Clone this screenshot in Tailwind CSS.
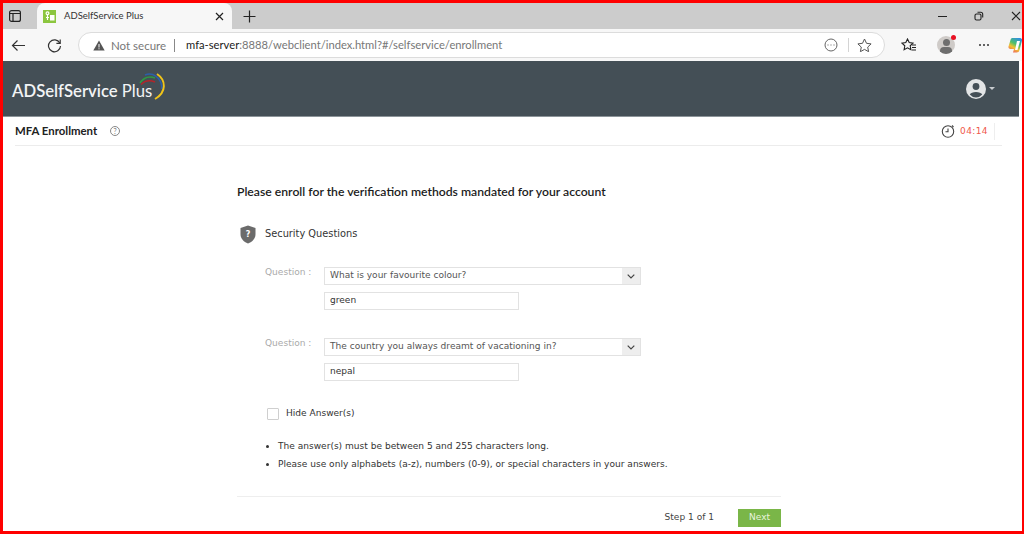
<!DOCTYPE html>
<html lang="en">
<head>
    <meta charset="UTF-8">
    <title>ADSelfService Plus</title>
    <script src="https://cdn.jsdelivr.net/npm/@tailwindcss/browser@4"></script>
</head>
<body class="bg-white overflow-hidden font-['Lato',sans-serif]">
<div class="h-[534px] w-[1024px] border-t-[3px] border-l-[3px] border-b-[3px] border-r-[2px] border-[#ff0000] flex flex-col overflow-hidden relative">

    <!-- Tab strip -->
    <div class="h-[26px] bg-[#cccccc] flex items-end shrink-0">
        <div class="w-[34px] h-full flex items-center pl-[6px]">
            <svg width="12" height="12" viewBox="0 0 12 12" fill="none" stroke="#222" stroke-width="1.2"><rect x="0.6" y="0.6" width="10.8" height="10.8" rx="2"/><path d="M0.6 3.5h10.8M4 3.5v8" /></svg>
        </div>
        <div class="w-[195px] h-[26px] bg-[#f7f7f7] rounded-t-lg flex items-center pl-[6px] pr-[8px]">
            <div class="w-[13px] h-[13px] bg-[#8cc63f] flex items-center justify-center">
                <svg width="10" height="10" viewBox="0 0 10 10" fill="none" stroke="#fff" stroke-width="1.2"><rect x="5" y="4" width="4.5" height="5.5" fill="#fff" stroke="none"/><circle cx="2.5" cy="2.2" r="1.4"/><path d="M2.5 3.6v5.5M1 6.5h3"/></svg>
            </div>
            <span class="ml-[8px] text-[9.5px] text-[#333] flex-1 whitespace-nowrap">ADSelfService Plus</span>
            <svg width="9" height="9" viewBox="0 0 9 9" stroke="#222" stroke-width="1.2"><path d="M1 1l7 7M8 1l-7 7"/></svg>
        </div>
        <div class="w-[36px] h-full flex items-center pl-[11px]">
            <svg width="13" height="13" viewBox="0 0 13 13" stroke="#222" stroke-width="1.2"><path d="M6.5 0.5v12M0.5 6.5h12"/></svg>
        </div>
        <div class="flex-1"></div>
        <div class="h-full flex items-center gap-[27px] pr-[1px]">
            <div class="w-[9px] h-px bg-[#222]"></div>
            <svg width="10" height="10" viewBox="0 0 10 10" fill="none" stroke="#222" stroke-width="1.1"><rect x="1" y="3" width="6" height="6" rx="1.5"/><path d="M3.5 1.2h3.2a2 2 0 0 1 2 2v3.3"/></svg>
            <svg width="10" height="10" viewBox="0 0 10 10" stroke="#222" stroke-width="1.1"><path d="M1 1l8 8M9 1l-8 8"/></svg>
        </div>
    </div>

    <!-- Address bar -->
    <div class="h-[32px] bg-[#f7f7f7] flex items-center shrink-0 pl-[8px]">
        <svg width="15" height="13" viewBox="0 0 15 13" fill="none" stroke="#333" stroke-width="1.2"><path d="M14 6.5H1.5M6.5 1.5l-5 5 5 5"/></svg>
        <svg class="ml-[21px]" width="15" height="15" viewBox="0 0 15 15" fill="none" stroke="#333" stroke-width="1.2"><path d="M12.8 5A6 6 0 1 0 13.5 8"/><path d="M13.2 1.5V5.3H9.4"/></svg>
        <div class="ml-[16px] w-[807px] h-[26px] bg-white rounded-full border border-[#dcdcdc] flex items-center pl-[14px] pr-[12px] shrink-0">
            <svg width="12" height="11" viewBox="0 0 12 11"><path d="M6 0.5L11.7 10.5H0.3Z" fill="#555"/><path d="M6 4v3.5M6 8.3v1" stroke="#fff" stroke-width="1"/></svg>
            <span class="ml-[6px] mt-px text-[11.5px] text-[#777] whitespace-nowrap">Not secure</span>
            <span class="ml-[8px] w-px h-[13px] bg-[#888]"></span>
            <span class="ml-[11px] mt-px text-[11.2px] text-[#777] whitespace-nowrap"><span class="text-[#222]">mfa-server</span>:8888/webclient/index.html?#/selfservice/enrollment</span>
            <div class="flex-1"></div>
            <svg width="14" height="14" viewBox="0 0 14 14" fill="none" stroke="#666" stroke-width="1"><circle cx="7" cy="7" r="6"/><path d="M3.5 7h1M6.5 7h1M9.5 7h1" stroke-width="1.2"/></svg>
            <span class="ml-[10px] w-px h-[14px] bg-[#d4d4d4]"></span>
            <svg class="ml-[8px]" width="15" height="14" viewBox="0 0 15 14" fill="none" stroke="#555" stroke-width="1"><path d="M7.5 1l2 4.3 4.6.6-3.4 3.2.9 4.6-4.1-2.3-4.1 2.3.9-4.6L.9 5.9l4.6-.6z"/></svg>
        </div>
        <svg class="ml-[16px] shrink-0" width="16" height="14" viewBox="0 0 16 14" fill="none" stroke="#222" stroke-width="1.1"><path d="M6.5 1l1.7 3.6 3.8.5-2.8 2.7.7 3.9-3.4-1.9-3.4 1.9.7-3.9L1 5.1l3.8-.5z"/><path d="M11 7h4M11 9.5h4M11 12h4"/></svg>
        <div class="ml-[20px] w-[18px] h-[18px] relative shrink-0">
            <div class="w-[18px] h-[18px] rounded-full bg-[#cfcbc8] relative overflow-hidden">
                <div class="absolute left-[5.5px] top-[3px] w-[7px] h-[7px] rounded-full bg-[#6e6e6e]"></div>
                <div class="absolute left-[3px] top-[11px] w-[12px] h-[8px] rounded-full bg-[#6e6e6e]"></div>
            </div>
            <span class="absolute right-[-1px] top-[-1px] w-[5px] h-[5px] rounded-full bg-[#e81123]"></span>
        </div>
        <div class="ml-[24px] flex gap-[2px] shrink-0">
            <span class="w-[2px] h-[2px] rounded-full bg-[#333]"></span><span class="w-[2px] h-[2px] rounded-full bg-[#333]"></span><span class="w-[2px] h-[2px] rounded-full bg-[#333]"></span>
        </div>
        <svg class="ml-[19px] shrink-0" width="14" height="16" viewBox="0 0 14 16">
            <defs>
                <linearGradient id="copilot" x1="0.7" y1="0" x2="0.2" y2="1">
                    <stop offset="0" stop-color="#2f8fe0"/>
                    <stop offset="0.4" stop-color="#4cc06a"/>
                    <stop offset="0.65" stop-color="#f2c230"/>
                    <stop offset="1" stop-color="#e8506e"/>
                </linearGradient>
            </defs>
            <path d="M4 1h8a2 2 0 0 1 2 2.5L11.5 13a3 3 0 0 1-3 2.5H5L6 12H2.5A2 2 0 0 1 .5 9.5L2.5 3A2.5 2.5 0 0 1 4 1z" fill="url(#copilot)"/>
            <path d="M9 4h3l-2.5 9H7z" fill="#fff"/>
        </svg>
    </div>

    <!-- App header -->
    <div class="h-[56px] bg-[#444f56] border-b border-[#8c9499] flex items-center justify-between shrink-0 pl-[9px] pr-[24px] mr-[3px] relative">
        <span class="mt-[6px] text-[16.7px] text-[#f2f4f5] font-semibold whitespace-nowrap">ADSelfService <span class="font-normal">Plus</span></span>
        <svg class="absolute left-[135px] top-[9px]" width="32" height="32" viewBox="0 0 32 32" fill="none" stroke-width="1.6">
            <path d="M2 13C6 7 12 6 17 8" stroke="#2e9a43"/>
            <path d="M3 14.5C7 10.5 12 10 17 12" stroke="#b3252a"/>
            <path d="M7 5C14 2 24 7 24 19" stroke="#2d5fa8"/>
            <path d="M19 4C28 10 29 22 17 29" stroke="#f0c419" stroke-width="1.9"/>
        </svg>
        <div class="flex items-center gap-[3px]">
            <svg width="20" height="20" viewBox="0 0 20 20"><circle cx="10" cy="10" r="10" fill="#e3e5e6"/><circle cx="10" cy="7.5" r="3.4" fill="#444f56"/><path d="M3.8 15.5C5 12 15 12 16.2 15.5A8 8 0 0 1 3.8 15.5Z" fill="#444f56"/></svg>
            <span class="w-0 h-0 border-l-[3.5px] border-r-[3.5px] border-t-[3.5px] border-l-transparent border-r-transparent border-t-[#c8cccf]"></span>
        </div>
    </div>

    <!-- Page title row -->
    <div class="h-[29px] ml-[12px] mr-[20px] border-b border-[#ececec] flex items-center shrink-0">
        <span class="text-[11.4px] font-bold text-[#222] whitespace-nowrap">MFA Enrollment</span>
        <span class="ml-[13px] w-[10px] h-[10px] rounded-full border border-[#888] text-[7px] leading-[8px] text-center text-[#777]">?</span>
        <div class="flex-1"></div>
        <svg width="14" height="14" viewBox="0 0 14 14" fill="none" stroke="#444" stroke-width="1.1"><circle cx="7" cy="7.5" r="5.7"/><path d="M7 4.5v3.2H4.5"/><path d="M11 1.5l1.5 1.5"/></svg>
        <span class="ml-[5px] mt-[2px] font-['DejaVu_Sans',sans-serif] text-[9px] tracking-[0.4px] text-[#f0584c]">04:14</span>
        <span class="ml-[6px] mr-[7px] w-px h-[17px] bg-[#eeeeee]"></span>
    </div>

    <!-- Enrollment form -->
    <div class="pl-[234px] w-[779px] font-['DejaVu_Sans',sans-serif] text-[9.05px] text-[#333]">
        <h1 class="mt-[37px] font-['Lato',sans-serif] text-[12.2px] font-semibold leading-[18px] text-[#1c1c1c] whitespace-nowrap">Please enroll for the verification methods mandated for your account</h1>

        <div class="mt-[23px] flex items-center h-[20px]">
            <svg class="ml-[3px]" width="16" height="19" viewBox="0 0 16 19"><path d="M8 0.5L15.5 3v6c0 4.5-3 7.8-7.5 9.5C3.5 16.8.5 13.5.5 9V3z" fill="#6b6b6b"/><text x="8" y="12" font-size="8" font-weight="bold" text-anchor="middle" fill="#fff" font-family="DejaVu Sans">?</text></svg>
            <span class="ml-[9px] text-[9.8px]">Security Questions</span>
        </div>

        <div class="mt-[23px] ml-[28px] flex">
            <span class="w-[59px] mt-[-1px] text-[#aaaaaa] leading-[12px]">Question :</span>
            <div>
                <div class="w-[317px] h-[18px] border border-[#e2e2e2] flex items-center">
                    <span class="flex-1 pl-[5px] text-[#555]">What is your favourite colour?</span>
                    <span class="w-[18px] h-full bg-[#eeeeee] flex items-center justify-center"><svg width="8" height="5" viewBox="0 0 8 5" fill="none" stroke="#444" stroke-width="1.2"><path d="M0.7 0.7L4 4l3.3-3.3"/></svg></span>
                </div>
                <div class="mt-[7px] w-[195px] h-[18px] border border-[#e2e2e2] flex items-center pl-[5px] text-[#333]">green</div>
            </div>
        </div>

        <div class="mt-[28px] ml-[28px] flex">
            <span class="w-[59px] mt-[-1px] text-[#aaaaaa] leading-[12px]">Question :</span>
            <div>
                <div class="w-[317px] h-[18px] border border-[#e2e2e2] flex items-center">
                    <span class="flex-1 pl-[5px] text-[#555]">The country you always dreamt of vacationing in?</span>
                    <span class="w-[18px] h-full bg-[#eeeeee] flex items-center justify-center"><svg width="8" height="5" viewBox="0 0 8 5" fill="none" stroke="#444" stroke-width="1.2"><path d="M0.7 0.7L4 4l3.3-3.3"/></svg></span>
                </div>
                <div class="mt-[7px] w-[195px] h-[18px] border border-[#e2e2e2] flex items-center pl-[5px] text-[#333]">nepal</div>
            </div>
        </div>

        <div class="mt-[26px] ml-[30px] flex items-center">
            <span class="w-[12px] h-[12px] border border-[#cfcfcf] rounded-[1px]"></span>
            <span class="ml-[7px]">Hide Answer(s)</span>
        </div>

        <ul class="mt-[19px] ml-[41px] list-disc leading-[12px] space-y-[6px] text-[#333] whitespace-nowrap">
            <li>The answer(s) must be between 5 and 255 characters long.</li>
            <li>Please use only alphabets (a-z), numbers (0-9), or special characters in your answers.</li>
        </ul>

        <div class="mt-[26px] w-[544px] border-t border-[#eeeeee] flex items-center justify-end pt-[12px]">
            <span class="text-[#444]">Step 1 of 1</span>
            <span class="ml-[24px] w-[43px] h-[18px] bg-[#7ab648] text-[#e8f3dc] flex items-center justify-center">Next</span>
        </div>
    </div>
</div>
</body>
</html>
